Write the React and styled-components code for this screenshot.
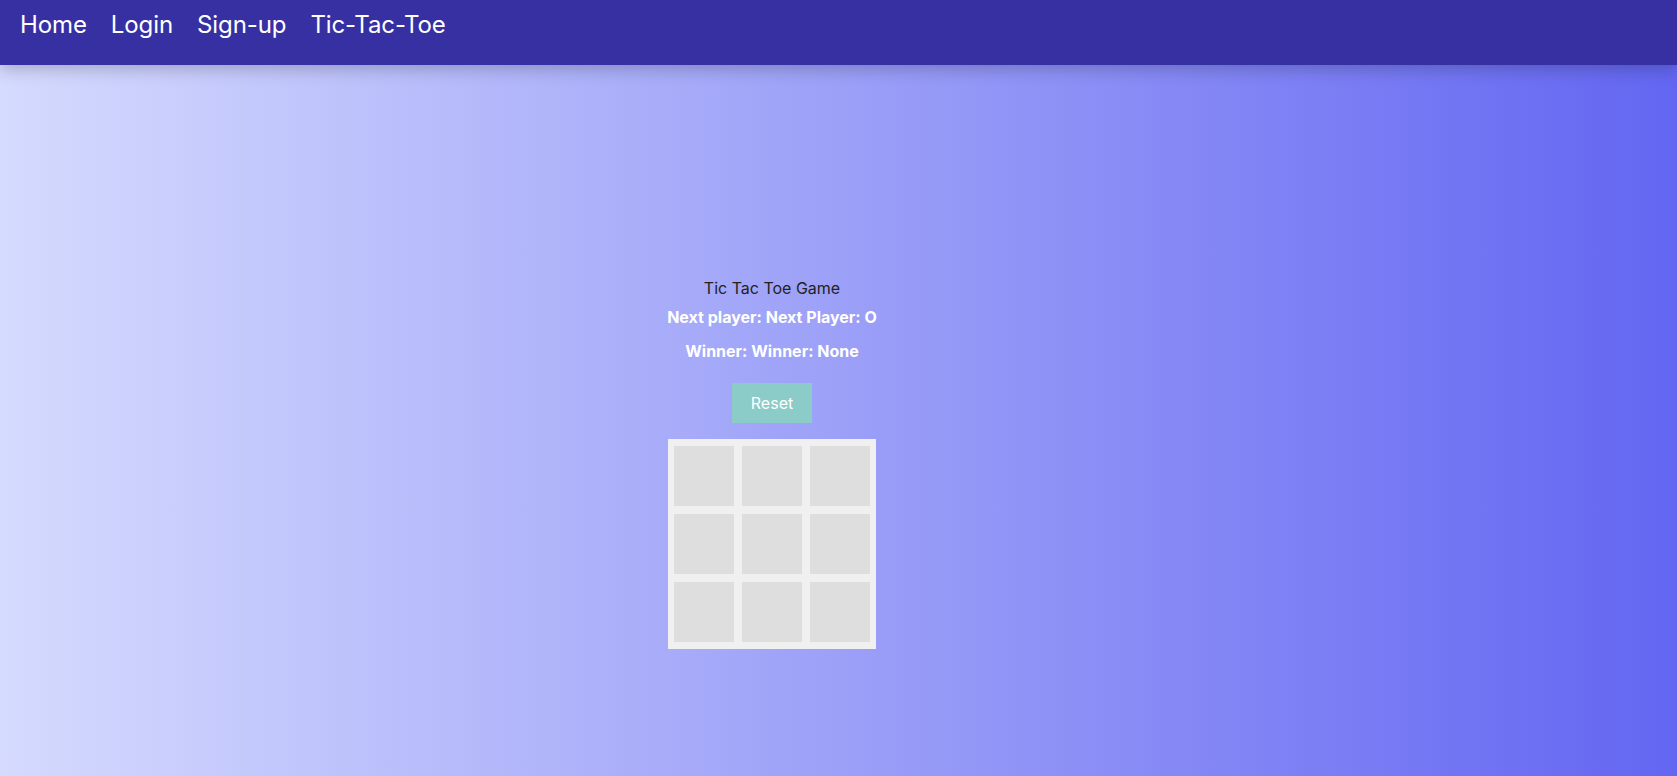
import React, { useState } from 'react';
import styled, { createGlobalStyle } from 'styled-components';

const GlobalStyle = createGlobalStyle`
  * { box-sizing: border-box; }
  html, body { margin: 0; padding: 0; }
  body {
    font-family: Inter, "Noto Sans", "Liberation Sans", sans-serif;
    min-height: 100vh;
    background: linear-gradient(to right, #d5dafe, #6366f1);
  }
`;

export default function App() {
  const [squares, setSquares] = useState(Array(9).fill(null));
  const [xNext, setXNext] = useState(false);

  // 클릭하면 X/O 넣기
  const handleClick = i => {
    if (squares[i]) return;
    const next = squares.slice();
    next[i] = xNext ? 'X' : 'O';
    setSquares(next);
    setXNext(!xNext);
  };

  const handleReset = () => {
    setSquares(Array(9).fill(null));
    setXNext(false);
  };

  return (
    <>
      <GlobalStyle />
      <S.Nav>
        <S.NavLink href="#">Home</S.NavLink>
        <S.NavLink href="#">Login</S.NavLink>
        <S.NavLink href="#">Sign-up</S.NavLink>
        <S.NavLink href="#">Tic-Tac-Toe</S.NavLink>
      </S.Nav>
      <S.Main>
        <S.Title>Tic Tac Toe Game</S.Title>
        <S.Status>Next player: Next Player: {xNext ? 'X' : 'O'}</S.Status>
        <S.Status $gap>Winner: Winner: None</S.Status>
        <S.ResetButton type="button" onClick={handleReset}>
          Reset
        </S.ResetButton>
        <S.Board>
          {squares.map((v, i) => (
            <S.Square key={i} type="button" onClick={() => handleClick(i)}>
              {v}
            </S.Square>
          ))}
        </S.Board>
      </S.Main>
    </>
  );
}

const S = {
  Nav: styled.nav`
    display: flex;
    align-items: flex-start;
    gap: 24px;
    height: 65px;
    padding: 9px 20px;
    background: #3730a3;
    box-shadow: 0 4px 16px rgba(0, 0, 0, 0.22);
    position: relative;
  `,
  NavLink: styled.a`
    color: #fff;
    text-decoration: none;
    font-size: 24px;
    line-height: 32px;
    letter-spacing: -0.1px;
  `,
  Main: styled.main`
    display: flex;
    flex-direction: column;
    align-items: center;
    padding: 211px 133px 0 0;
  `,
  Title: styled.div`
    font-size: 16px;
    line-height: 24px;
    color: #222;
  `,
  Status: styled.div`
    margin-top: ${p => (p.$gap ? '10px' : '5px')};
    font-size: 16px;
    line-height: 24px;
    font-weight: 700;
    color: #fff;
  `,
  ResetButton: styled.button`
    margin-top: 20px;
    width: 80px;
    height: 40px;
    border: none;
    background: #8bcbc8;
    color: #fff;
    font-family: inherit;
    font-size: 16px;
    cursor: pointer;
  `,
  Board: styled.div`
    margin-top: 16px;
    display: grid;
    grid-template-columns: repeat(3, 60px);
    grid-auto-rows: 60px;
    gap: 8px;
    padding: 7px 6px;
    background: #f0f0f0;
  `,
  Square: styled.button`
    border: none;
    padding: 0;
    background: #dedede;
    font-family: inherit;
    font-size: 32px;
    font-weight: 700;
    color: #333;
    cursor: pointer;
  `,
};
